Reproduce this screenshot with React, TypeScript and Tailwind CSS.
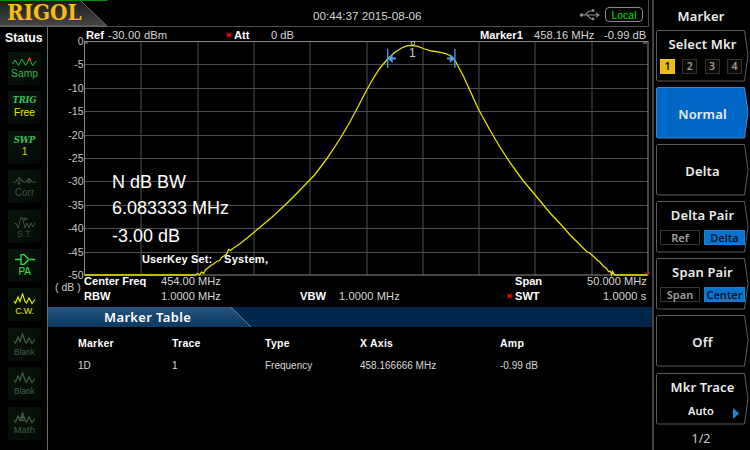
import React from "react";

const TRACE: [number, number][] = [
  [85, 274.5], [196, 274.5], [198, 273], [200, 274.5], [202, 271.5], [204, 273], [206, 269], [209, 267], [211, 265], [214, 263.5], [217, 261],
  [220, 260], [222, 257], [225, 255], [227, 253.5], [229, 249], [231, 250], [234, 247.5], [240, 243.5], [250, 235.5], [260, 227], [272, 217],
  [285, 205], [300, 190], [315, 174.5], [327, 158.5], [340, 139], [350, 122], [357, 109], [366, 91.5], [373, 79], [380, 68], [388, 58.5],
  [395, 52], [402, 47.5], [407, 45.3], [413, 44.8], [419, 46.2], [425, 48.5], [432, 50.5], [440, 51.7], [446, 53], [452, 56], [456, 61],
  [464, 76], [471, 91.5], [479, 109], [490, 129], [500, 146], [511, 163], [523, 179.5], [536, 195], [550, 212], [565, 228], [570, 234],
  [580, 244], [587, 251], [590, 252.5], [594, 256], [598, 260], [600, 261], [604, 266], [607, 268], [609, 271], [611, 271], [612, 274.5], [613, 271], [615, 274.5],
  [648, 274.5],
];

const H_LINES = [1, 2, 3, 4, 5, 6, 7, 8, 9].map((i) => Math.round(i * 23.4) + 0.5);
const V_LINES = [1, 2, 3, 4, 5, 6, 7, 8, 9].map((i) => Math.round(i * 56.3) + 1);

function Plot() {
  const pts = TRACE.map(([x, y]) => `${x - 84.4},${y - 40.5}`).join(" ");
  return (
    <svg width="565" height="235" viewBox="0 0 565 235" className="block overflow-visible">
      {H_LINES.map((y) => (
        <path key={y} d={`M0 ${y}H564`} stroke="#4c4c4c" />
      ))}
      {V_LINES.map((x) => (
        <path key={x} d={`M${x} 0V234`} stroke="#505050" />
      ))}
      <rect x="0.5" y="0.5" width="563.5" height="233.5" fill="none" stroke="#8a8a8a" />
      <path d="M1 2h3M559 2h4" stroke="#a0a0a0" />
      <polyline points={pts} fill="none" stroke="#e4e400" strokeWidth="1.3" />
      <g stroke="#4f9fe8" strokeWidth="1.3" fill="#55a9f5">
        <path d="M303.700 8V27M370.900 8V27" fill="none" />
        <path d="M306 17.500h6M363 17.500h6" strokeWidth="1.800" />
        <path d="M308 14.500L304.500 17.500l3.500 3zM366.500 14.500L370 17.500l-3.500 3z" />
      </g>
      <circle cx="329" cy="2.300" r="1.800" fill="#000" stroke="#d0d0d0" strokeWidth="1" />
      <path d="M561 231l2.500 2.500 2.500-2.500" stroke="#e01010" fill="none" />
    </svg>
  );
}

const WAVE = "M1 8l1.500 2L5 4l2 4.500L9.500 0.800 12 8.500l1.500 1.500 2.500-5 3 5.500 3-4";

function Tile({ icon, label, color, labelClass }: { icon: React.ReactNode; label: string; color: string; labelClass: string }) {
  return (
    <div className={`flex h-[33px] w-[33px] shrink-0 flex-col items-center bg-gradient-to-br from-[#08150b] to-[#030904] pt-[5px] ${color}`}>
      <div className="flex h-[9px] items-center justify-center">{icon}</div>
      <div className={`mt-[1px] h-[12px] whitespace-nowrap leading-[12px] ${labelClass}`}>{label}</div>
    </div>
  );
}

function Wave({ math = false }: { math?: boolean }) {
  return (
    <svg width="23" height="12" viewBox="0 0 23 12" fill="none" stroke="currentColor" strokeWidth="1.200" className="mt-[3px] shrink-0">
      <path d={WAVE} />
      {math && <path d="M7 5.500h5M9.500 4v5M7.500 8.500h4" />}
    </svg>
  );
}

const serifIcon = (s: string) => (
  <span className="font-['DejaVu_Serif',serif] text-[8.500px] font-bold italic leading-[9px] tracking-[-0.200px] text-[#3fbf58]">{s}</span>
);

function StatusBar() {
  return (
    <aside className="flex h-[423px] w-[48px] shrink-0 flex-col border-r border-[#6c6c6c] bg-black pl-[8px]">
      <div className="-ml-[3px] h-[25px] pt-[4px] text-[12.300px] font-bold leading-[14px] text-white">Status</div>
      <div className="flex flex-col gap-[6.400px]">
        <Tile
          color="text-[#36b34c]"
          labelClass="pt-[1px] text-[10.300px]"
          label="Samp"
          icon={
            <svg width="25" height="10" viewBox="0 0 25 10" fill="none" stroke="currentColor">
              <path d="M0.500 7l2.500-4 3.500 5.500L10 2l3.500 6.500L17.500 2l3 6.500L24 4" />
              <path d="M16 3.500L17.500 1 19 3.500" stroke="#f03020" strokeWidth="1.400" />
            </svg>
          }
        />
        <Tile color="" labelClass="pt-[1px] text-[10.300px] text-[#e8e800]" label="Free" icon={serifIcon("TRIG")} />
        <Tile color="" labelClass="text-[10.300px] text-[#d8d800]" label="1" icon={serifIcon("SWP")} />
        <Tile
          color="text-[#445246]"
          labelClass="pt-[2px] text-[10px]"
          label="Corr"
          icon={
            <svg width="23" height="10" viewBox="0 0 23 10" fill="none" stroke="currentColor" strokeWidth="1.200" className="mt-[3px] shrink-0">
              <path d="M0 6h3l3-4.500L10 6h3l3-3.500L19 6h4M6 4v5M4.500 7.500h3M16 4.500v3M14.500 6h3" />
            </svg>
          }
        />
        <Tile
          color="text-[#3c5240]"
          labelClass="pt-[3px] text-[8.500px]"
          label="S.T."
          icon={
            <svg width="23" height="13" viewBox="0 0 23 13" fill="none" stroke="currentColor" className="mt-[6px] shrink-0">
              <path d="M1 8l2-1 2 5 3-11 2 3 2 8 2-5 2 5 2-5 2 4 2-4M9 3h6M12 1v4" />
            </svg>
          }
        />
        <Tile
          color="text-[#2fe040]"
          labelClass="pt-[2px] text-[10px] tracking-[-0.300px]"
          label="PA"
          icon={
            <svg width="20" height="11" viewBox="0 0 20 11" fill="none" stroke="currentColor" strokeWidth="1.300" className="mt-[3px] shrink-0">
              <path d="M0 5.500h6M15 5.500h5M6 0.700v9.600h3l5-4.800-5-4.800z" />
            </svg>
          }
        />
        <Tile color="text-[#e8e800]" labelClass="pt-[2px] text-[9px] tracking-[-0.200px]" label="C.W." icon={<Wave />} />
        <Tile color="text-[#426048]" labelClass="pt-[3px] text-[8.300px]" label="Blank" icon={<Wave />} />
        <Tile color="text-[#426048]" labelClass="pt-[3px] text-[8.300px]" label="Blank" icon={<Wave />} />
        <Tile color="text-[#426048]" labelClass="pt-[2px] text-[9.300px] tracking-[0.200px]" label="Math" icon={<Wave math />} />
      </div>
    </aside>
  );
}

function Header() {
  return (
    <header className="relative flex h-[27px] w-[649px] shrink-0 items-center border-b border-r border-[#4e4e4e]">
      <svg className="absolute left-0 top-0" width="110" height="27" viewBox="0 0 110 27">
        <defs>
          <linearGradient id="tab" x1="0" y1="0" x2="0" y2="1">
            <stop offset="0" stopColor="#1c1c1c" />
            <stop offset="1" stopColor="#464646" />
          </linearGradient>
        </defs>
        <path d="M0 1H81L107 26H0z" fill="url(#tab)" />
        <path d="M81 1L107 26H0" fill="none" stroke="#6a6a6a" />
        <path d="M0 0.500H107.500" stroke="#078a12" />
      </svg>
      <div className="relative h-[26px] w-[313px] pl-[7px]">
        <div className="w-fit origin-left scale-x-[0.910] font-['DejaVu_Serif',serif] text-[22px] font-bold leading-[25px] text-[#fbbc12]">RIGOL</div>
      </div>
      <div className="w-[266px] pt-[5px] text-[11.700px] leading-[14px] text-[#d4d4d4]">00:44:37 2015-08-06</div>
      <svg width="22" height="14" viewBox="0 0 22 14" fill="none" stroke="#8c8c8c" strokeWidth="1.100" className="mt-[3px] shrink-0">
        <path d="M2 7h17M6 7l4-4h3M8 7l4 4h2M17 5l3 2-3 2" />
        <circle cx="2.500" cy="7" r="1.200" fill="#8c8c8c" />
        <path d="M13 1.500h2v2h-2zM13 10h2v2h-2z" fill="#8c8c8c" strokeWidth="0.500" />
      </svg>
      <div className="ml-[4px] mt-[3px] h-[15px] w-[38px] shrink-0 rounded-[4px] border border-[#8a8a8a] text-center text-[10.500px] leading-[14px] text-[#00e000]">Local</div>
    </header>
  );
}

function Param({ w, bold, children }: { w: string; bold?: boolean; children: React.ReactNode }) {
  return <span className={`${w} shrink-0 whitespace-nowrap ${bold ? "font-bold text-white" : "text-[#d6d6d6]"}`}>{children}</span>;
}

const Star = () => (
  <svg width="6" height="6" viewBox="0 0 6 6" stroke="#f01010" strokeWidth="1.200" className="mr-[2px] shrink-0">
    <path d="M0 3h6M1 0.500l4 5M5 0.500l-4 5" />
  </svg>
);

function Spectrum() {
  const labels = ["0", "-5", "-10", "-15", "-20", "-25", "-30", "-35", "-40", "-45", "-50"];
  return (
    <section className="h-[280px]">
      <div className="flex h-[14px] items-center pl-[38px] pt-[2px] text-[11.200px] leading-[12px]">
        <Param w="w-[22px]" bold>Ref</Param>
        <Param w="w-[118px]"><span className="tracking-[0.150px]">-30.00 dBm</span></Param>
        <Star />
        <Param w="w-[37px]" bold>Att</Param>
        <Param w="w-[209px]">0 dB</Param>
        <Param w="w-[54px]" bold>Marker1</Param>
        <Param w="w-[70px]">458.16 MHz</Param>
        <Param w="w-[44px]">-0.99 dB</Param>
      </div>
      <div className="flex h-[234px]">
        <div className="-mt-[6px] flex h-[246px] w-[37px] shrink-0 flex-col justify-between pr-[1.500px] text-right text-[10.500px] leading-[12px] text-[#c8c8c8]">
          {labels.map((l) => (
            <span key={l} className="h-[12px]">{l}</span>
          ))}
        </div>
        <div className="relative -ml-px">
          <Plot />
          <span className="absolute left-[325px] top-[5px] text-[12px] leading-[14px] text-[#c8c8c8]">1</span>
          <div className="absolute left-[28px] top-[130px] whitespace-nowrap text-[18px] text-white">
            <div className="h-[26px] leading-[22px]">N dB BW</div>
            <div className="h-[28px] leading-[22px]">6.083333 MHz</div>
            <div className="h-[26px] leading-[22px]">-3.00 dB</div>
          </div>
          <div className="absolute left-[58px] top-[211px] flex whitespace-nowrap text-[11px] font-bold leading-[14px] text-white">
            <span className="w-[82px] tracking-[0.150px]">UserKey Set:</span>
            <span className="tracking-[0.300px]">System,</span>
          </div>
        </div>
      </div>
      <div className="flex h-[32px] text-[11.100px] leading-[14px]">
        <div className="w-[36px] shrink-0 whitespace-nowrap pl-[7px] pt-[5px] text-[10.500px] text-[#c8c8c8]">( dB )</div>
        <div className="-mt-px flex w-[566px] shrink-0 flex-col">
          <div className="flex h-[14px] items-center">
            <Param w="w-[77px]" bold>Center Freq</Param>
            <Param w="w-[354px]">454.00 MHz</Param>
            <Param w="w-[72px]" bold>Span</Param>
            <Param w="w-[60px]">50.000 MHz</Param>
          </div>
          <div className="flex h-[15px] items-center">
            <Param w="w-[77px]" bold>RBW</Param>
            <Param w="w-[139px]">1.0000 MHz</Param>
            <Param w="w-[39px]" bold>VBW</Param>
            <Param w="w-[168px]"><span className="tracking-[0.100px]">1.0000 MHz</span></Param>
            <Star />
            <Param w="w-[88px]" bold>SWT</Param>
            <Param w="w-[46px]"><span className="tracking-[0.100px]">1.0000 s</span></Param>
          </div>
        </div>
      </div>
    </section>
  );
}

const COLS = [
  { w: "w-[94px]", head: "Marker", value: "1D" },
  { w: "w-[93px]", head: "Trace", value: "1" },
  { w: "w-[95px]", head: "Type", value: "Frequency" },
  { w: "w-[140px]", head: "X Axis", value: "458.166666 MHz" },
  { w: "w-[80px]", head: "Amp", value: "-0.99 dB" },
];

function MarkerTable() {
  return (
    <section className="h-[143px] text-white">
      <div className="relative h-[20px] bg-[#00254b]">
        <svg className="absolute left-0 top-0" width="206" height="20" viewBox="0 0 206 20">
          <defs>
            <linearGradient id="band" x1="0" y1="0" x2="0" y2="1">
              <stop offset="0" stopColor="#285580" />
              <stop offset="0.500" stopColor="#17446f" />
              <stop offset="1" stopColor="#0e385f" />
            </linearGradient>
          </defs>
          <path d="M0 0H183L203 20H0z" fill="url(#band)" />
          <path d="M183 0L203 20" stroke="#5484ad" />
        </svg>
        <div className="relative pl-[56px] font-['Noto_Sans',sans-serif] text-[13px] font-semibold leading-[20px] tracking-[0.350px]">Marker Table</div>
      </div>
      <div className="flex pl-[30px] pt-[9px] text-[10.500px] font-bold leading-[14px]">
        {COLS.map((c) => (
          <span key={c.head} className={`${c.w} tracking-[0.250px]`}>{c.head}</span>
        ))}
      </div>
      <div className="flex pl-[30px] pt-[8.500px] text-[10px] leading-[14px] text-[#d8d8d8]">
        {COLS.map((c) => (
          <span key={c.head} className={`${c.w} whitespace-nowrap`}>{c.value}</span>
        ))}
      </div>
    </section>
  );
}

function Key({ title, active, children }: { title: string; active?: boolean; children?: React.ReactNode }) {
  return (
    <div className="relative h-[51.500px] w-[93px] shrink-0">
      <svg className="absolute left-0 top-0" width="93" height="52" viewBox="0 0 93 52">
        <path d="M1.500 0.500H88.500L92 25.500L88.500 51H1.500L0.500 50V1.500z" fill={active ? "#0067c6" : "#000"} stroke={active ? "#4386bd" : "#5c5c5c"} />
      </svg>
      <div className={`relative flex h-full flex-col items-center ${children ? "justify-start pt-[4px]" : "justify-center pt-[2px]"}`}>
        <div className="w-[91px] text-center text-[13px] font-semibold leading-[20px] tracking-[0.150px]">{title}</div>
        {children}
      </div>
    </div>
  );
}

function Toggle({ off, on }: { off: string; on: string }) {
  return (
    <div className="mt-[5px] flex w-[85px] gap-[4px] text-center text-[11px] font-semibold leading-[13px]">
      <span className="h-[15px] w-[40px] border border-[#383838] text-[#a0a0a0]">{off}</span>
      <span className="h-[15px] w-[41px] border border-[#1482dc] bg-[#0a74d0] text-[#02182c]">{on}</span>
    </div>
  );
}

function Menu() {
  return (
    <aside className="flex h-[450px] w-[98px] shrink-0 flex-col border-l-2 border-[#434343] bg-black pl-[2px] font-['Noto_Sans',sans-serif] text-[#ececec]">
      <div className="h-[30px] w-[90px] pt-[6px] text-center text-[13px] font-semibold leading-[20px] tracking-[0.100px]">Marker</div>
      <div className="flex flex-col gap-[5.600px]">
        <Key title="Select Mkr">
          <div className="mt-[5px] flex w-[85px] gap-[7.300px] text-center text-[10.500px] font-semibold leading-[13px]">
            <span className="h-[15px] w-[15px] border border-[#f0c418] bg-[#e8bc12] text-black">1</span>
            {["2", "3", "4"].map((n) => (
              <span key={n} className="h-[15px] w-[15px] border border-[#34302a] bg-[#0c0a06] text-[#989898]">{n}</span>
            ))}
          </div>
        </Key>
        <Key title="Normal" active />
        <Key title="Delta" />
        <Key title="Delta Pair"><Toggle off="Ref" on="Delta" /></Key>
        <Key title="Span Pair"><Toggle off="Span" on="Center" /></Key>
        <Key title="Off" />
        <Key title="Mkr Trace">
          <div className="mt-[6px] flex w-[85px] items-center pl-[28px] text-[11px] font-semibold leading-[15px]">
            <span className="w-[45px]">Auto</span>
            <svg width="7" height="11" viewBox="0 0 7 11" className="mt-[5px]">
              <path d="M0 0L6 5.500L0 11z" fill="#118bdc" />
            </svg>
          </div>
        </Key>
      </div>
      <div className="w-[90px] pt-[5px] text-center text-[12.500px] leading-[20px] text-[#c8c8c8]">1/2</div>
    </aside>
  );
}

export default function App() {
  return (
    <div className="flex h-[450px] w-[750px] overflow-hidden bg-black font-['Liberation_Sans',Arial,sans-serif]">
      <div className="flex w-[652px] shrink-0 flex-col">
        <Header />
        <div className="flex">
          <StatusBar />
          <main className="w-[604px] shrink-0">
            <Spectrum />
            <MarkerTable />
          </main>
        </div>
      </div>
      <Menu />
    </div>
  );
}
